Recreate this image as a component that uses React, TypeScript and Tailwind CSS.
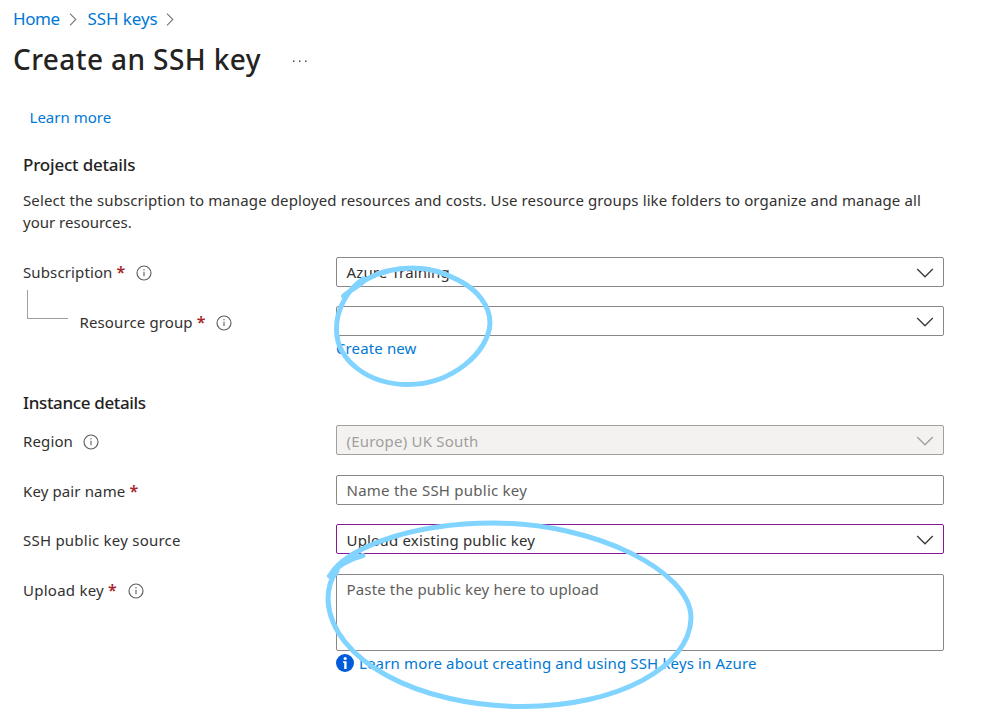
import type { ReactNode } from 'react';

function InfoIcon() {
  return (
    <svg className="size-4 shrink-0" viewBox="0 0 16 16" fill="none" stroke="#605e5c">
      <circle cx="8" cy="8" r="7" strokeWidth="1.15" />
      <path d="M8 6.7V11.3" strokeWidth="1.1" />
      <circle cx="8" cy="4.8" r=".7" fill="#605e5c" stroke="none" />
    </svg>
  );
}

function Label({ children, required, info, className = '' }: {
  children: ReactNode; required?: boolean; info?: boolean; className?: string;
}) {
  return (
    <div className={`flex h-[30px] shrink-0 items-center whitespace-nowrap ${className}`}>
      <span>{children}</span>
      {required && <span className="ml-[4px] w-2 text-[16px] font-semibold text-[#a4262c]">*</span>}
      {info && <span className={required ? 'mt-px ml-[11.500px]' : 'mt-px ml-[10.500px]'}><InfoIcon /></span>}
    </div>
  );
}

function Box({ children, textClass = '', className, chevron }: {
  children?: ReactNode; textClass?: string; className: string; chevron?: string;
}) {
  return (
    <div className={`flex h-[30px] w-[608px] shrink-0 items-center justify-between rounded-[2px] border pr-[9px] pl-[9.5px] whitespace-nowrap ${className}`}>
      <span className={textClass}>{children}</span>
      {chevron && (
        <svg className="mt-px h-[10px] w-[18px]" viewBox="0 0 18 10" fill="none" stroke={chevron} strokeWidth="1.3">
          <path d="M1.200 1L9 8.800L16.800 1" />
        </svg>
      )}
    </div>
  );
}

function Crumb() {
  return (
    <svg className="h-[13px] w-2" viewBox="0 0 8 13" fill="none" stroke="#797775" strokeWidth="1.1">
      <path d="M1 .7L6.8 6.5L1 12.3" />
    </svg>
  );
}

export default function App() {
  return (
    <main className="relative h-[712px] w-[1008px] overflow-hidden bg-white font-['Noto_Sans','Open_Sans',sans-serif] text-[15px] leading-[22px] tracking-[0.123px] text-[#323130]">
      <nav className="flex h-[38px] items-center pl-[13px] text-[17px] whitespace-nowrap text-[#0078d4]">
        <a className="w-[47px] tracking-[-0.4px]">Home</a>
        <span className="ml-[9px]"><Crumb /></span>
        <a className="ml-[10.500px] w-[69.500px] tracking-[-0.1px]">SSH keys</a>
        <span className="ml-[9px]"><Crumb /></span>
      </nav>
      <header className="flex h-[44px] items-center pl-[13px] whitespace-nowrap">
        <h1 className="-mt-[2px] w-[248px] text-[28px] leading-[44px] font-medium tracking-[0.4px] text-[#242322]">Create an SSH key</h1>
        <svg className="mt-[2px] ml-[31px] h-1 w-4" viewBox="0 0 16 4" fill="#484644">
          <rect x="1" y="1.5" width="1.5" height="1.5" />
          <rect x="7" y="1.5" width="1.5" height="1.5" />
          <rect x="13" y="1.5" width="1.5" height="1.5" />
        </svg>
      </header>
      <a className="mt-6 ml-[29.5px] block h-[22px] w-fit tracking-[0.02px] text-[#0078d4]">Learn more</a>
      <div className="pl-[23px]">
        <h2 className="mt-[26px] h-[22px] text-[17px] font-medium tracking-[-0.2px] text-[#242322]">Project details</h2>
        <p className="mt-[13px] h-11 whitespace-nowrap">
          <span className="block w-fit">Select the subscription to manage deployed resources and costs. Use resource groups like folders to organize and manage all</span>
          <span className="block w-fit tracking-normal">your resources.</span>
        </p>
        <div className="mt-6 flex">
          <Label className="w-[313px]" required info>Subscription</Label>
          <Box className="border-[#8a8886]" chevron="#3b3a39">Azure Training</Box>
        </div>
        <div className="flex h-[49px]">
          <div className="mt-[3px] ml-1 h-[29px] w-[41px] shrink-0 border-b border-l border-[#a19f9d]" />
          <Label className="mt-5 ml-[11.5px] w-[256.5px]" required info>Resource group</Label>
          <Box className="mt-[19px] border-[#8a8886]" chevron="#3b3a39" />
        </div>
        <a className="mt-px ml-[313px] block h-[22px] w-fit text-[#0078d4]">Create new</a>
        <h2 className="mt-[33px] h-[22px] text-[17px] font-medium tracking-[-0.35px] text-[#242322]">Instance details</h2>
        <div className="mt-[11px] flex">
          <Label className="mt-px -mb-px w-[313px]" info>Region</Label>
          <Box className="border-[#a19f9d] bg-[#f3f2f1] text-[#a19f9d]" textClass="pt-[2px] tracking-[0.2px]" chevron="#a19f9d">(Europe) UK South</Box>
        </div>
        <div className="mt-5 flex">
          <Label className="mt-px -mb-px w-[313px]" required>Key pair name</Label>
          <Box className="border-[#8a8886] text-[#605e5c]" textClass="tracking-[0.24px]">Name the SSH public key</Box>
        </div>
        <div className="mt-[19px] flex">
          <Label className="mt-px -mb-px w-[313px] tracking-[0.23px]">SSH public key source</Label>
          <Box className="border-[#881798]" textClass="pt-[2px] tracking-[0.18px]" chevron="#3b3a39">Upload existing public key</Box>
        </div>
        <div className="mt-5 flex">
          <Label className="mt-px w-[313px] tracking-[0.25px]" required info>Upload key</Label>
          <div className="h-[77px] w-[608px] rounded-[2px] border border-[#8a8886] pt-[3px] pl-[9.5px] tracking-[0.15px] text-[#605e5c]">
            <span>Paste the public key here to upload</span>
          </div>
        </div>
        <div className="mt-px ml-[313px] flex h-[22px] items-center tracking-[0.15px] whitespace-nowrap text-[#0078d4]">
          <svg className="mr-[5px] size-[18px]" viewBox="0 0 18 18">
            <circle cx="9" cy="9" r="9" fill="#015cda" />
            <circle cx="9.2" cy="4.5" r="1.6" fill="#fff" />
            <path d="M7 7.2H10.6V15H8.2V8.7H7Z" fill="#fff" />
          </svg>
          <a>Learn more about creating and using SSH keys in Azure</a>
        </div>
      </div>
      <svg className="pointer-events-none absolute inset-0" width="1008" height="712" viewBox="0 0 1008 712" fill="none" stroke="#80d4ff" strokeWidth="5" strokeLinecap="round" strokeLinejoin="round">
        <path d="M343.500 296C349 291 358 287 365 280C379 272 393 268 413 268C431 268 445 273 458 280C478 290 490 306 490 323C489 352 452 384.500 408 384.500C369 384.500 337 361 336.500 330C336 310 347 290 363 279" />
        <path d="M329.500 576C338 565 349 559 363 555.500M331 574C344 551 405 523 494 523C595 523 691 571 691 618C690 667 617 706.500 523 706.500C418 706.500 331 660 328 600C328 591 330 579 337 571" />
      </svg>
    </main>
  );
}
